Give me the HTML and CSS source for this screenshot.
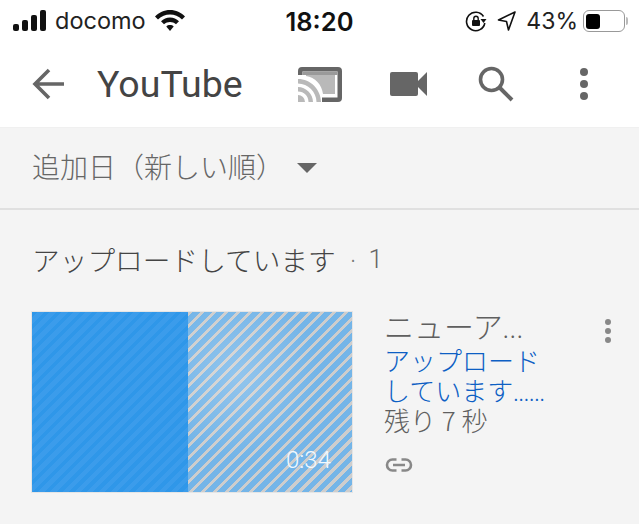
FILE: index.html
```html
<!DOCTYPE html>
<html lang="ja">
<head>
    <meta charset="UTF-8">
    <title>YouTube</title>
    <link rel="stylesheet" href="styles.css">
</head>
<body>
    <div class="status-bar">
        <div class="status-left">
            <svg class="signal" width="34" height="22" viewBox="0 0 34 22">
                <rect x="0" y="14" width="6" height="7" rx="2"/>
                <rect x="9" y="10" width="6" height="11" rx="2"/>
                <rect x="18" y="5" width="6" height="16" rx="2"/>
                <rect x="27" y="0" width="6" height="21" rx="2"/>
            </svg>
            <span class="carrier">docomo</span>
            <svg class="wifi" width="30" height="22" viewBox="0 0 30 22">
                <path d="M15 0C9 0 4 2.500 0 6.500L3 9.500C6.500 6.200 10.500 4.500 15 4.500S23.500 6.200 27 9.500L30 6.500C26 2.500 21 0 15 0Z"/>
                <path d="M15 7.500C11.500 7.500 8.500 9 6 11.200L9 14.200C10.800 12.800 12.800 12 15 12S19.200 12.800 21 14.200L24 11.200C21.500 9 18.500 7.500 15 7.500Z"/>
                <path d="M15 15C13.500 15 12.300 15.500 11.300 16.400L15 21L18.700 16.400C17.700 15.500 16.500 15 15 15Z"/>
            </svg>
        </div>
        <div class="status-time">18:20</div>
        <div class="status-right">
            <svg width="22" height="22" viewBox="0 0 22 22" fill="none" stroke="#111">
                <path d="M18.500 6.500A9.200 9.200 0 1 0 19.800 13" stroke-width="1.600"/>
                <path d="M15.500 9L21.500 9L18.500 13Z" fill="#111" stroke="none"/>
                <rect x="7" y="10" width="8" height="6" rx="1" fill="#111" stroke="none"/>
                <path d="M8.800 10V8.500A2.200 2.200 0 0 1 13.200 8.500V10" stroke-width="1.400"/>
            </svg>
            <svg class="arrow" width="20" height="22" viewBox="0 0 20 22" fill="none" stroke="#111" stroke-width="1.600">
                <path d="M18 2L1.500 10L9.500 11.500L11.500 20Z" stroke-linejoin="round"/>
            </svg>
            <span class="percent">43%</span>
            <div class="battery"><div class="battery-level"></div></div>
            <div class="battery-tip"></div>
        </div>
    </div>

    <div class="app-bar">
        <svg class="back" width="32" height="32" viewBox="0 0 32 32" fill="none" stroke="#666" stroke-width="3.600">
            <path d="M32 16H3M17 2L3 16L17 30"/>
        </svg>
        <div class="app-title">YouTube</div>
        <div class="app-actions">
            <svg width="44" height="36" viewBox="0 0 44 36">
                <path d="M0 9V5A4 4 0 0 1 4 1H40A4 4 0 0 1 44 5V32A4 4 0 0 1 40 36H24V31.500H39.500V5.500H4.500V9H0Z" fill="#666"/>
                <path d="M0 9H4.500V5.500H39.500V9Z" fill="#9a9a9a"/>
                <path d="M8 9H37V28H25C24 19 17 11 8 10Z" fill="#b9b9b9"/>
                <path d="M0 13C12.500 13 23 23.500 23 36H18.500C18.500 26 10 17.500 0 17.500ZM0 21C8 21 15 28 15 36H10.500C10.500 30 6 25.500 0 25.500ZM0 29A7 7 0 0 1 7 36H0Z" fill="#b9b9b9"/>
            </svg>
            <svg width="37" height="24" viewBox="0 0 37 24">
                <rect x="0" y="0" width="28" height="24" rx="2" fill="#666"/>
                <path d="M28 9L37 0V24L28 15Z" fill="#666"/>
            </svg>
            <svg class="search" width="36" height="36" viewBox="0 0 36 36" fill="none" stroke="#666">
                <circle cx="13.500" cy="13.500" r="11" stroke-width="3.600"/>
                <path d="M21.500 21.500L34 34" stroke-width="4"/>
            </svg>
            <svg class="more" width="8" height="32" viewBox="0 0 8 32" fill="#666">
                <circle cx="4" cy="4" r="4"/>
                <circle cx="4" cy="16" r="4"/>
                <circle cx="4" cy="28" r="4"/>
            </svg>
        </div>
    </div>

    <div class="sort-bar">
        <span class="sort-label">追加日（新しい順）</span>
        <span class="sort-caret"></span>
    </div>

    <div class="section-title">
        <span>アップロードしています</span>
        <span class="section-dot">·</span>
        <span class="section-count">1</span>
    </div>

    <div class="video-row">
        <div class="thumb">
            <div class="thumb-done"></div>
            <div class="thumb-left"><span class="thumb-time">0:34</span></div>
        </div>
        <div class="video-info">
            <div class="video-name">ニューア<span class="name-dots">...</span></div>
            <div class="video-status">アップロード<br>しています<span class="status-dots">......</span></div>
            <div class="video-left">残り 7 秒</div>
            <svg class="link-icon" width="28" height="14" viewBox="0 0 28 14" fill="none" stroke="#888" stroke-width="2.600">
                <path d="M11.500 1.500H7.500A5.500 5.500 0 0 0 7.500 12.500H11.500M16.500 1.500H20.500A5.500 5.500 0 0 1 20.500 12.500H16.500M8 7H20"/>
            </svg>
        </div>
        <svg class="row-menu" width="8" height="24" viewBox="0 0 8 24" fill="#888">
            <circle cx="4" cy="3" r="3"/>
            <circle cx="4" cy="12" r="3"/>
            <circle cx="4" cy="21" r="3"/>
        </svg>
    </div>
</body>
</html>
```

FILE: styles.css
```css
html, body {
    margin: 0;
    height: 100%;
    overflow: hidden;
}

body {
    background-color: #f4f4f4;
    font-family: "Noto Sans CJK JP", Roboto, sans-serif;
    width: 639px;
    height: 524px;
}

/* Status bar */
.status-bar {
    background-color: #fff;
    height: 42px;
    padding: 0 13px;
    display: grid;
    grid-template-columns: 1fr auto 1fr;
    align-items: center;
    color: #111;
}

.status-left {
    display: flex;
    align-items: center;
}

.signal {
    fill: #111;
    margin-right: 8px;
}

.carrier {
    font-family: "Inter", sans-serif;
    font-size: 23.500px;
    line-height: 24px;
    color: #222;
}

.wifi {
    fill: #111;
    margin-left: 9px;
}

.status-time {
    font-family: "Inter", sans-serif;
    font-size: 25.500px;
    font-weight: 600;
    color: #111;
}

.status-right {
    display: flex;
    align-items: center;
    justify-content: flex-end;
    margin-right: -2px;
}

.arrow {
    margin-left: 10px;
}

.percent {
    font-family: "Inter", sans-serif;
    font-size: 23px;
    margin-left: 9px;
    color: #222;
}

.battery {
    width: 38px;
    height: 15px;
    margin-left: 5px;
    padding: 2.500px 0 2.500px 2px;
    border: 1.500px solid #999;
    border-radius: 6px;
}

.battery-level {
    width: 14px;
    height: 15px;
    background-color: #000;
    border-radius: 3px;
}

.battery-tip {
    width: 2px;
    height: 8px;
    margin-left: 1px;
    background-color: #bbb;
    border-radius: 0 2px 2px 0;
}

/* App bar */
.app-bar {
    background-color: #fff;
    height: 83px;
    display: flex;
    align-items: center;
    padding: 0 51px 2px 32px;
    border-bottom: 1px solid #f0f0f0;
}

.app-title {
    font-family: Roboto, sans-serif;
    font-size: 37.500px;
    color: #444;
    margin-left: 33px;
}

.app-actions {
    margin-left: auto;
    display: flex;
    align-items: center;
    gap: 48px;
}

.search {
    margin-left: 3px;
}

.more {
    margin-left: 18px;
}

/* Sort */
.sort-bar {
    height: 82px;
    box-sizing: border-box;
    border-bottom: 2px solid #e0e0e0;
    display: flex;
    align-items: center;
    padding: 0 0 5px 32px;
}

.sort-label {
    font-size: 28px;
    font-weight: 300;
    color: #666;
}

.sort-caret {
    width: 0;
    height: 0;
    margin: 5px 0 0 13px;
    border-left: 10px solid transparent;
    border-right: 10px solid transparent;
    border-top: 10px solid #666;
}

/* Section */
.section-title {
    display: flex;
    align-items: center;
    padding: 27px 0 1px 32px;
    height: 44px;
    font-size: 27.700px;
    font-weight: 300;
    color: #444;
}

.section-dot {
    margin-left: 12px;
    color: #777;
    font-size: 20px;
}

.section-count {
    margin-left: 10px;
    font-family: Roboto, sans-serif;
    font-size: 26px;
    color: #666;
}

/* Video */
.video-row {
    display: flex;
    align-items: flex-start;
    padding: 30px 27px 0 32px;
}

.thumb {
    width: 320px;
    height: 180px;
    display: flex;
    flex-shrink: 0;
    box-shadow: 0 0 0 1px rgba(0, 0, 0, 0.06);
}

.thumb-done {
    width: 156px;
    background-color: #2f97e9;
    background-image: repeating-linear-gradient(135deg, #2f97e9 0, #2f97e9 4px, #3b9ceb 4px, #3b9ceb 8.500px);
}

.thumb-left {
    flex: 1;
    position: relative;
    background-image:
        radial-gradient(ellipse at 30% 35%, rgba(255, 255, 255, 0.22), rgba(255, 255, 255, 0) 50%),
        repeating-linear-gradient(135deg, #cdcdcd 0, #cdcdcd 3.200px, #74b5e8 3.200px, #74b5e8 8.500px);
}

.thumb-time {
    position: absolute;
    right: 21px;
    bottom: 20px;
    font-family: Roboto, sans-serif;
    font-size: 24px;
    line-height: 24px;
    font-weight: 300;
    color: #f2f9ff;
}

.video-info {
    margin: -2px 0 0 32px;
    width: 190px;
    display: flex;
    flex-direction: column;
    align-items: flex-start;
}

.video-name {
    font-size: 30px;
    font-weight: 300;
    line-height: 30px;
    color: #5f5f5f;
}

.name-dots {
    font-size: 24px;
    letter-spacing: 1px;
}

.video-status {
    font-size: 26px;
    font-weight: 300;
    line-height: 30px;
    margin-top: 2px;
    color: #0d5fc4;
}

.status-dots {
    font-size: 21px;
}

.video-left {
    font-size: 26px;
    font-weight: 300;
    line-height: 32px;
    margin-top: -3px;
    color: #5f5f5f;
}

.link-icon {
    margin: 22px 0 0 1px;
}

.row-menu {
    margin-left: auto;
    margin-top: 7px;
}
```
